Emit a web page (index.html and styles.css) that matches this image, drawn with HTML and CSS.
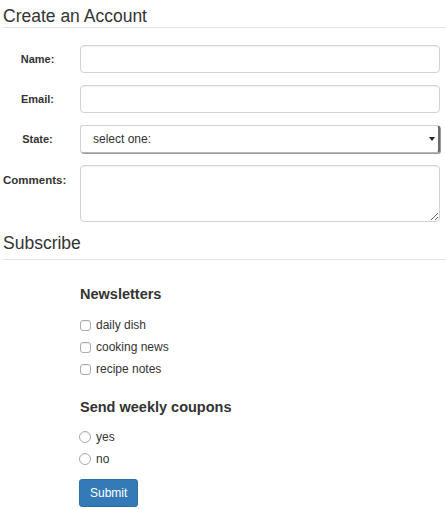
FILE: index.html
```html
<!DOCTYPE html>
<html>
<head>
<meta charset="utf-8">
<link rel="stylesheet" href="styles.css">
</head>
<body>
<div class="page">
  <h2 class="title title-first">Create an Account</h2>
  <form class="form">
    <div class="row">
      <label class="lbl">Name:</label>
      <input class="ctl" type="text">
    </div>
    <div class="row">
      <label class="lbl">Email:</label>
      <input class="ctl" type="text">
    </div>
    <div class="row">
      <label class="lbl">State:</label>
      <div class="sel-wrap">
        <select class="ctl sel"><option>select one:</option></select>
      </div>
    </div>
    <div class="row row-top">
      <label class="lbl lbl-top">Comments:</label>
      <textarea class="ctl area"></textarea>
    </div>
  </form>
  <h2 class="title title-second">Subscribe</h2>
  <div class="sub">
    <h4 class="sub-title">Newsletters</h4>
    <div class="opts">
      <label class="opt"><input type="checkbox" class="chk"><span>daily dish</span></label>
      <label class="opt"><input type="checkbox" class="chk"><span>cooking news</span></label>
      <label class="opt"><input type="checkbox" class="chk"><span>recipe notes</span></label>
    </div>
    <h4 class="sub-title sub-title-2">Send weekly coupons</h4>
    <div class="opts opts-radio">
      <label class="opt"><input type="radio" name="c" class="rad"><span>yes</span></label>
      <label class="opt"><input type="radio" name="c" class="rad"><span>no</span></label>
    </div>
    <button class="btn" type="button">Submit</button>
  </div>
</div>
</body>
</html>
```
FILE: styles.css
```css
* { box-sizing: border-box; }
html, body { margin: 0; padding: 0; background: #fff; }
body {
  font-family: "Liberation Sans", Helvetica, Arial, sans-serif;
  color: #333;
  font-size: 12px;
}
.page {
  width: 446px;
  padding: 0 6px 0 3px;
}
.title {
  margin: 0 -6px 0 0;
  font-size: 17.5px;
  font-weight: normal;
  line-height: 20px;
  color: #333;
  border-bottom: 1px solid #e6e6e6;
}
.title-first {
  padding: 6px 0 1px 0;
}
.title-second {
  margin-top: 11px;
  padding: 0 0 6px 0;
}
.form {
  margin-top: 17px;
}
.row {
  display: flex;
  align-items: center;
  margin-bottom: 12px;
}
.row-top {
  align-items: flex-start;
  margin-bottom: 0;
}
.lbl {
  width: 69px;
  flex: none;
  margin-right: 8px;
  text-align: center;
  font-weight: bold;
  font-size: 11px;
  line-height: 15px;
  white-space: nowrap;
}
.lbl-top {
  padding-top: 8px;
  text-align: left;
  font-size: 11.5px;
}
.ctl {
  flex: 1;
  height: 28px;
  border: 1px solid #d2d2d2;
  border-radius: 4px;
  box-shadow: inset 0 1px 1px rgba(0,0,0,0.05);
  font-family: "Liberation Sans", Helvetica, Arial, sans-serif;
  font-size: 12px;
  color: #333;
  padding: 4px 12px;
  background: #fff;
  outline: none;
  margin: 0;
}
.sel-wrap {
  flex: 1;
  display: flex;
  position: relative;
}
.sel {
  -webkit-appearance: none;
  appearance: none;
  width: 100%;
  border-right: 2px solid #6b6b6b;
  border-bottom-color: #b8b8b8;
  box-shadow: 1px 1px 0 #9a9a9a;
  border-radius: 3px;
}
.sel-wrap::after {
  content: "";
  position: absolute;
  right: 5px;
  top: 12px;
  border-left: 3px solid transparent;
  border-right: 3px solid transparent;
  border-top: 4px solid #222;
}
.area {
  height: 57px;
  resize: both;
}
.sub {
  padding-left: 77px;
}
.sub-title {
  margin: 25px 0 0 0;
  font-size: 14.5px;
  line-height: 18px;
  font-weight: bold;
  color: #333;
}
.sub-title-2 {
  margin-top: 18px;
}
.opts {
  margin-top: 11px;
  display: flex;
  flex-direction: column;
}
.opts-radio {
  margin-top: 10px;
}
.opt {
  display: flex;
  align-items: center;
  height: 22px;
  font-size: 12px;
}
.chk, .rad {
  -webkit-appearance: none;
  appearance: none;
  width: 11px;
  height: 11px;
  margin: 0 5px 0 0;
  border: 1px solid #ababab;
  background: #fff;
  box-shadow: inset 0 1px 0 rgba(0,0,0,0.06);
  flex: none;
}
.chk { border-radius: 3px; }
.rad { border-radius: 50%; width: 12px; height: 12px; margin-left: -1px; margin-right: 5px; }
.btn {
  margin-top: 9px;
  display: block;
  height: 28px;
  padding: 5px 10px;
  font-family: "Liberation Sans", Helvetica, Arial, sans-serif;
  font-size: 12px;
  line-height: 16px;
  color: #fff;
  background: #337ab7;
  border: 1px solid #2e6da4;
  border-radius: 3px;
  margin-left: -1px;
}
```
